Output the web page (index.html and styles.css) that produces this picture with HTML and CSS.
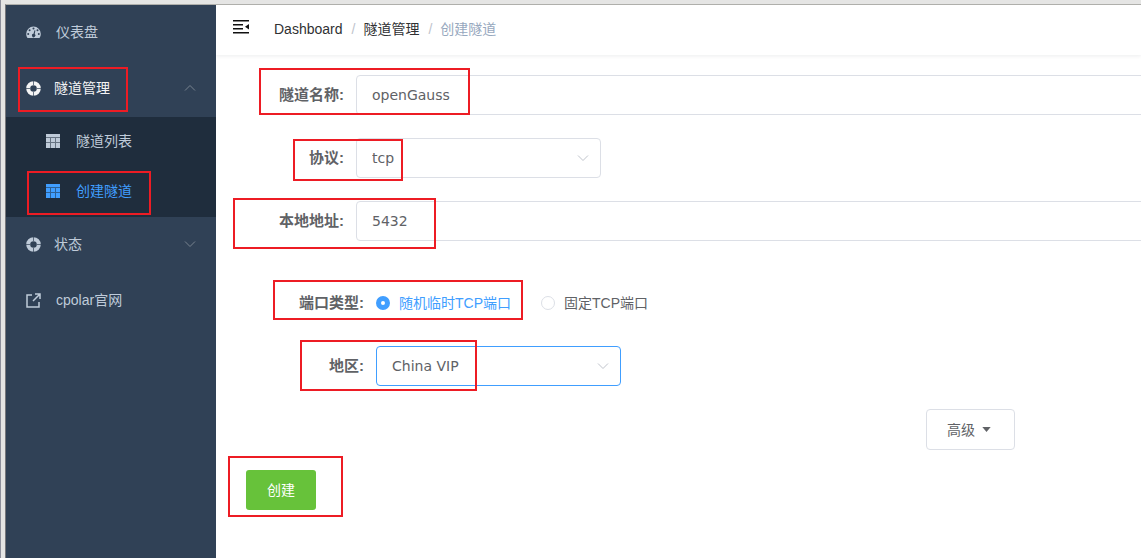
FILE: index.html
```html
<!DOCTYPE html>
<html lang="zh-CN">
<head>
<meta charset="utf-8">
<title>创建隧道</title>
<link rel="stylesheet" href="styles.css">
</head>
<body>
<svg class="defs" aria-hidden="true">
  <symbol id="ring" viewBox="0 0 15 15"><circle cx="7.500" cy="7.500" r="5.300" fill="none" stroke="currentColor" stroke-width="4"/><path d="M7.500 0v4M7.500 11v4M0 7.500h4M11 7.500h4" stroke="#304156" stroke-width="1" opacity=".7"/></symbol>
  <symbol id="grid" viewBox="0 0 15 15"><path fill="currentColor" d="M0 0h14v14H0z"/><path fill="#1f2d3d" opacity=".55" d="M0 3h14v1H0zM0 8h14v1H0zM4 4h1v10H4zM9 4h1v10H9z"/></symbol>
  <symbol id="chevron" viewBox="0 0 12 12"><path d="M1 3.500 6 8.500 11 3.500" fill="none" stroke="currentColor"/></symbol>
</svg>
<div class="app">
  <nav class="sidebar">
    <a class="item" href="#"><svg class="icon" viewBox="0 0 15 15"><path fill="currentColor" fill-rule="evenodd" d="M7.500 1.500A7.300 7.300 0 0 0 .2 8.800c0 1.700.4 3 1.300 4.200h12c.9-1.200 1.300-2.500 1.300-4.200A7.300 7.300 0 0 0 7.500 1.500zM7.500 2.600a1 1 0 1 1 0 2 1 1 0 0 1 0-2zM3.600 4.200a1 1 0 1 1 0 2 1 1 0 0 1 0-2zM11.500 4.200a1 1 0 1 1 0 2 1 1 0 0 1 0-2zM2.200 8a1 1 0 1 1 0 2 1 1 0 0 1 0-2zM12.800 8a1 1 0 1 1 0 2 1 1 0 0 1 0-2zM8.500 5.200l.9.300-.7 3.600a1.700 1.700 0 1 1-1.200-.3z"/></svg><span class="name wide">仪表盘</span></a>
    <a class="item open" href="#"><svg class="icon"><use href="#ring"/></svg><span class="name">隧道管理</span><svg class="chevron up"><use href="#chevron"/></svg></a>
    <div class="submenu">
      <a class="item sub" href="#"><svg class="icon"><use href="#grid"/></svg><span class="name wide">隧道列表</span></a>
      <a class="item sub current" href="#"><svg class="icon"><use href="#grid"/></svg><span class="name wide">创建隧道</span></a>
    </div>
    <a class="item" href="#"><svg class="icon"><use href="#ring"/></svg><span class="name">状态</span><svg class="chevron"><use href="#chevron"/></svg></a>
    <a class="item" href="#"><svg class="icon" viewBox="0 0 15 15"><path fill="none" stroke="currentColor" stroke-width="1.500" d="M6 2H1v12h12V9M9 1h5v5M14 1 7 8"/></svg><span class="name wide">cpolar官网</span></a>
  </nav>
  <div class="page">
    <header class="topbar">
      <button class="fold" type="button" aria-label="菜单"><svg viewBox="0 0 16 14"><path fill="currentColor" d="M0 0h16v1.600H0zM0 4h10v1.600H0zM0 8h10v1.600H0zM0 12h16v1.600H0zM16 4v5.600l-4-2.800z"/></svg></button>
      <div class="crumbs"><a href="#">Dashboard</a><i>/</i><a href="#">隧道管理</a><i>/</i><span>创建隧道</span></div>
    </header>
    <main>
      <form class="form">
        <div class="row"><label for="name">隧道名称:</label><input class="field" id="name" type="text" value="openGauss"></div>
        <div class="row"><label for="proto">协议:</label><div class="pick"><select class="field" id="proto"><option>tcp</option></select><svg class="chevron"><use href="#chevron"/></svg></div></div>
        <div class="row"><label for="addr">本地地址:</label><input class="field" id="addr" type="text" value="5432"></div>
        <div class="group">
          <div class="row" role="radiogroup" aria-labelledby="port"><span class="label" id="port">端口类型:</span><label class="radio"><input type="radio" name="port" checked><span>随机临时TCP端口</span></label><label class="radio"><input type="radio" name="port"><span>固定TCP端口</span></label></div>
          <div class="row"><label for="region">地区:</label><div class="pick active"><select class="field" id="region"><option>China VIP</option></select><svg class="chevron"><use href="#chevron"/></svg></div></div>
        </div>
        <div class="more"><button class="advanced" type="button">高级<svg viewBox="0 0 10 6"><path fill="currentColor" d="M0 0h10L5 6z"/></svg></button></div>
        <button class="create" type="button">创建</button>
      </form>
    </main>
  </div>
</div>
<div class="mark m1"></div><div class="mark m2"></div><div class="mark m3"></div><div class="mark m4"></div><div class="mark m5"></div><div class="mark m6"></div><div class="mark m7"></div><div class="mark m8"></div>
</body>
</html>
```
FILE: styles.css
```css
* { box-sizing: border-box; }
body {
  margin: 0;
  background: #e5e5e4;
  border-left: 1px solid #8d8f9b;
  color: #606266;
  font: 14px/20px "Liberation Sans", "Noto Sans CJK SC", sans-serif;
  overflow: hidden;
  padding: 4px 0 0 4px;
}
a { color: inherit; text-decoration: none; }
button { font: inherit; cursor: pointer; }
.defs { position: absolute; width: 0; height: 0; }
.app {
  display: flex;
  min-height: 100vh;
  border-top: 1px solid #afafab;
  border-left: 1px solid #77777b;
  background: #fff;
}

.sidebar { flex: none; width: 210px; background: #304156; color: #bfcbd9; }
.item { display: flex; align-items: center; height: 56px; padding: 0 20px 2px; }
.icon { width: 15px; height: 15px; margin-right: 13px; flex: none; }
.item .name { flex: 1; }
.item .wide { padding-left: 2px; }
.open { color: #f4f4f5; }
.submenu { background: #1f2d3d; }
.sub { height: 50px; padding-left: 40px; }
.current { color: #409eff; }
.chevron { width: 12px; height: 12px; color: #909399; flex: none; }
.item .chevron { color: #78838f; }
.up { transform: rotate(180deg); }

.page { flex: 1; min-width: 0; overflow: hidden; }
.topbar {
  display: flex;
  align-items: center;
  height: 50px;
  padding: 0 16px 2px;
  box-shadow: 0 1px 4px rgba(0, 21, 41, .08);
}
.fold { border: 0; background: none; padding: 0 0 4px 1px; width: 18px; color: #111; }
.fold svg { display: block; width: 16px; height: 14px; }
.crumbs { display: flex; padding-left: 24px; color: #303133; }
.crumbs i { margin: 0 8px 0 9px; color: #c0c4cc; font-style: normal; }
.crumbs span { color: #97a8be; }

.form { padding: 20px 0 0 30px; }
.row { display: flex; align-items: center; height: 40px; margin: 0 -8px 23px 0; }
.row > label, .label {
  flex: none;
  width: 110px;
  padding-right: 12px;
  text-align: right;
  font-weight: 700;
  font-size: 15px;
}
.row > .radio {
  display: flex;
  align-items: center;
  width: auto;
  padding: 0;
  margin-right: 30px;
  font-size: 14px;
  font-weight: 400;
}
.field {
  display: block;
  width: 100%;
  height: 40px;
  padding: 0 15px;
  border: 1px solid #dcdfe6;
  border-radius: 4px;
  background: #fff;
  color: #606266;
  font: 14px/20px "DejaVu Sans", sans-serif;
  appearance: none;
}
.pick { display: flex; align-items: center; width: 245px; }
.pick .field { flex: none; }
.pick .chevron { margin-left: -24px; color: #c0c4cc; pointer-events: none; }
.active .field { border-color: #409eff; }
.group { padding: 19px 0 0 20px; }
.radio input {
  appearance: none;
  width: 14px;
  height: 14px;
  margin: 0 9px 0 0;
  border: 1px solid #dcdfe6;
  border-radius: 50%;
}
.radio input:checked { border: 5px solid #409eff; }
.radio input:checked + span { color: #409eff; }

.more { display: flex; justify-content: flex-end; padding-right: 126px; }
.advanced {
  display: flex;
  align-items: center;
  gap: 7px;
  height: 41px;
  padding: 0 23px 0 20px;
  border: 1px solid #dcdfe6;
  border-radius: 4px;
  background: #fff;
  color: #606266;
}
.advanced svg { width: 9px; height: 5px; }
.create {
  height: 40px;
  margin-top: 20px;
  padding: 0 21px;
  border: 0;
  border-radius: 3px;
  background: #67c23a;
  color: #fff;
}

.mark { position: absolute; border: 2px solid #ed1c24; pointer-events: none; }
.m1 { left: 18px; top: 67px; width: 110px; height: 45px; }
.m2 { left: 27px; top: 171px; width: 124px; height: 44px; }
.m3 { left: 259px; top: 68px; width: 211px; height: 47px; }
.m4 { left: 293px; top: 139px; width: 110px; height: 42px; }
.m5 { left: 233px; top: 198px; width: 203px; height: 51px; }
.m6 { left: 273px; top: 280px; width: 250px; height: 40px; }
.m7 { left: 300px; top: 340px; width: 177px; height: 51px; }
.m8 { left: 228px; top: 456px; width: 115px; height: 61px; }
```
